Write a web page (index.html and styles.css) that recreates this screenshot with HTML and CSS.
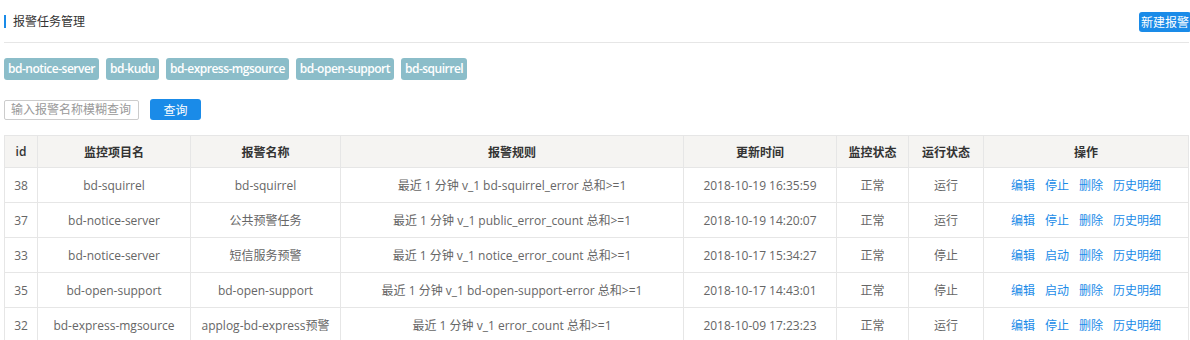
FILE: index.html
```html
<!DOCTYPE html>
<html lang="zh-CN">
<head>
    <meta charset="UTF-8">
    <meta name="viewport" content="width=device-width, initial-scale=1.0">
    <title>报警任务管理</title>
    <link rel="stylesheet" href="styles.css">
</head>
<body>
    <div id="page">
        <div class="title-bar">
            <h2 class="title">报警任务管理</h2>
            <button class="btn btn-new">新建报警</button>
        </div>
        <div class="tags">
            <span class="tag">bd-notice-server</span>
            <span class="tag">bd-kudu</span>
            <span class="tag">bd-express-mgsource</span>
            <span class="tag">bd-open-support</span>
            <span class="tag">bd-squirrel</span>
        </div>
        <div class="search">
            <input type="text" class="search-input" placeholder="输入报警名称模糊查询">
            <button class="btn btn-search">查询</button>
        </div>
        <table class="alarm-table">
            <colgroup>
                <col style="width: 33px">
                <col style="width: 153px">
                <col style="width: 150px">
                <col style="width: 343px">
                <col style="width: 153px">
                <col style="width: 72px">
                <col style="width: 75px">
                <col>
            </colgroup>
            <thead>
                <tr>
                    <th>id</th>
                    <th>监控项目名</th>
                    <th>报警名称</th>
                    <th>报警规则</th>
                    <th>更新时间</th>
                    <th>监控状态</th>
                    <th>运行状态</th>
                    <th>操作</th>
                </tr>
            </thead>
            <tbody>
                <tr>
                    <td>38</td>
                    <td>bd-squirrel</td>
                    <td>bd-squirrel</td>
                    <td>最近 1 分钟 v_1 bd-squirrel_error 总和&gt;=1</td>
                    <td>2018-10-19 16:35:59</td>
                    <td>正常</td>
                    <td>运行</td>
                    <td class="ops"><a>编辑</a><a>停止</a><a>删除</a><a>历史明细</a></td>
                </tr>
                <tr>
                    <td>37</td>
                    <td>bd-notice-server</td>
                    <td>公共预警任务</td>
                    <td>最近 1 分钟 v_1 public_error_count 总和&gt;=1</td>
                    <td>2018-10-19 14:20:07</td>
                    <td>正常</td>
                    <td>运行</td>
                    <td class="ops"><a>编辑</a><a>停止</a><a>删除</a><a>历史明细</a></td>
                </tr>
                <tr>
                    <td>33</td>
                    <td>bd-notice-server</td>
                    <td>短信服务预警</td>
                    <td>最近 1 分钟 v_1 notice_error_count 总和&gt;=1</td>
                    <td>2018-10-17 15:34:27</td>
                    <td>正常</td>
                    <td>停止</td>
                    <td class="ops"><a>编辑</a><a>启动</a><a>删除</a><a>历史明细</a></td>
                </tr>
                <tr>
                    <td>35</td>
                    <td>bd-open-support</td>
                    <td>bd-open-support</td>
                    <td>最近 1 分钟 v_1 bd-open-support-error 总和&gt;=1</td>
                    <td>2018-10-17 14:43:01</td>
                    <td>正常</td>
                    <td>停止</td>
                    <td class="ops"><a>编辑</a><a>启动</a><a>删除</a><a>历史明细</a></td>
                </tr>
                <tr>
                    <td>32</td>
                    <td>bd-express-mgsource</td>
                    <td>applog-bd-express预警</td>
                    <td>最近 1 分钟 v_1 error_count 总和&gt;=1</td>
                    <td>2018-10-09 17:23:23</td>
                    <td>正常</td>
                    <td>运行</td>
                    <td class="ops"><a>编辑</a><a>停止</a><a>删除</a><a>历史明细</a></td>
                </tr>
            </tbody>
        </table>
    </div>
</body>
</html>
```

FILE: styles.css
```css
* {
    margin: 0;
    padding: 0;
    box-sizing: border-box;
    font-family: "Open Sans", "Noto Sans CJK SC", sans-serif;
}

body {
    background-color: #ffffff;
    color: #666666;
    font-size: 12px;
}

#page {
    padding: 0 1px 0 4px;
}

.title-bar {
    display: flex;
    justify-content: space-between;
    align-items: center;
    height: 43px;
    padding-top: 1px;
    border-bottom: 1px solid #e6e6e6;
}

.title {
    font-size: 12px;
    font-weight: normal;
    color: #333333;
    border-left: 2px solid #1a8be8;
    padding-left: 7px;
    line-height: 13px;
}

.btn {
    border: none;
    border-radius: 3px;
    background-color: #1a8be8;
    color: #ffffff;
    cursor: pointer;
}

.btn-new {
    font-size: 12px;
    height: 20px;
    padding: 0 2px;
    margin-right: -2px;
}

.tags {
    display: flex;
    gap: 7px;
    margin-top: 15px;
}

.tag {
    display: inline-block;
    height: 22px;
    line-height: 22px;
    padding: 0 4px;
    border-radius: 3px;
    background-color: #8bbdc9;
    color: #ffffff;
    font-weight: 600;
    font-size: 12px;
    letter-spacing: -0.5px;
}

.search {
    display: flex;
    align-items: center;
    gap: 11px;
    margin-top: 19px;
}

.search-input {
    width: 135px;
    height: 20px;
    border: 1px solid #cccccc;
    border-radius: 2px;
    padding: 0 6px;
    font-size: 12px;
    color: #666666;
    outline: none;
}

.search-input::placeholder {
    color: #999999;
}

.btn-search {
    width: 51px;
    height: 21px;
    font-size: 12px;
}

.alarm-table {
    width: 1185px;
    margin-top: 15px;
    border-collapse: collapse;
    table-layout: fixed;
}

.alarm-table th,
.alarm-table td {
    border: 1px solid #e6e6e6;
    text-align: center;
    white-space: nowrap;
    font-size: 12px;
}

.alarm-table th {
    height: 32px;
    background-color: #f5f4f2;
    color: #333333;
    font-weight: 600;
}

.alarm-table td {
    height: 35px;
    color: #666666;
}

.ops a {
    color: #1a8be8;
    margin: 0 5px;
    cursor: pointer;
}
```
